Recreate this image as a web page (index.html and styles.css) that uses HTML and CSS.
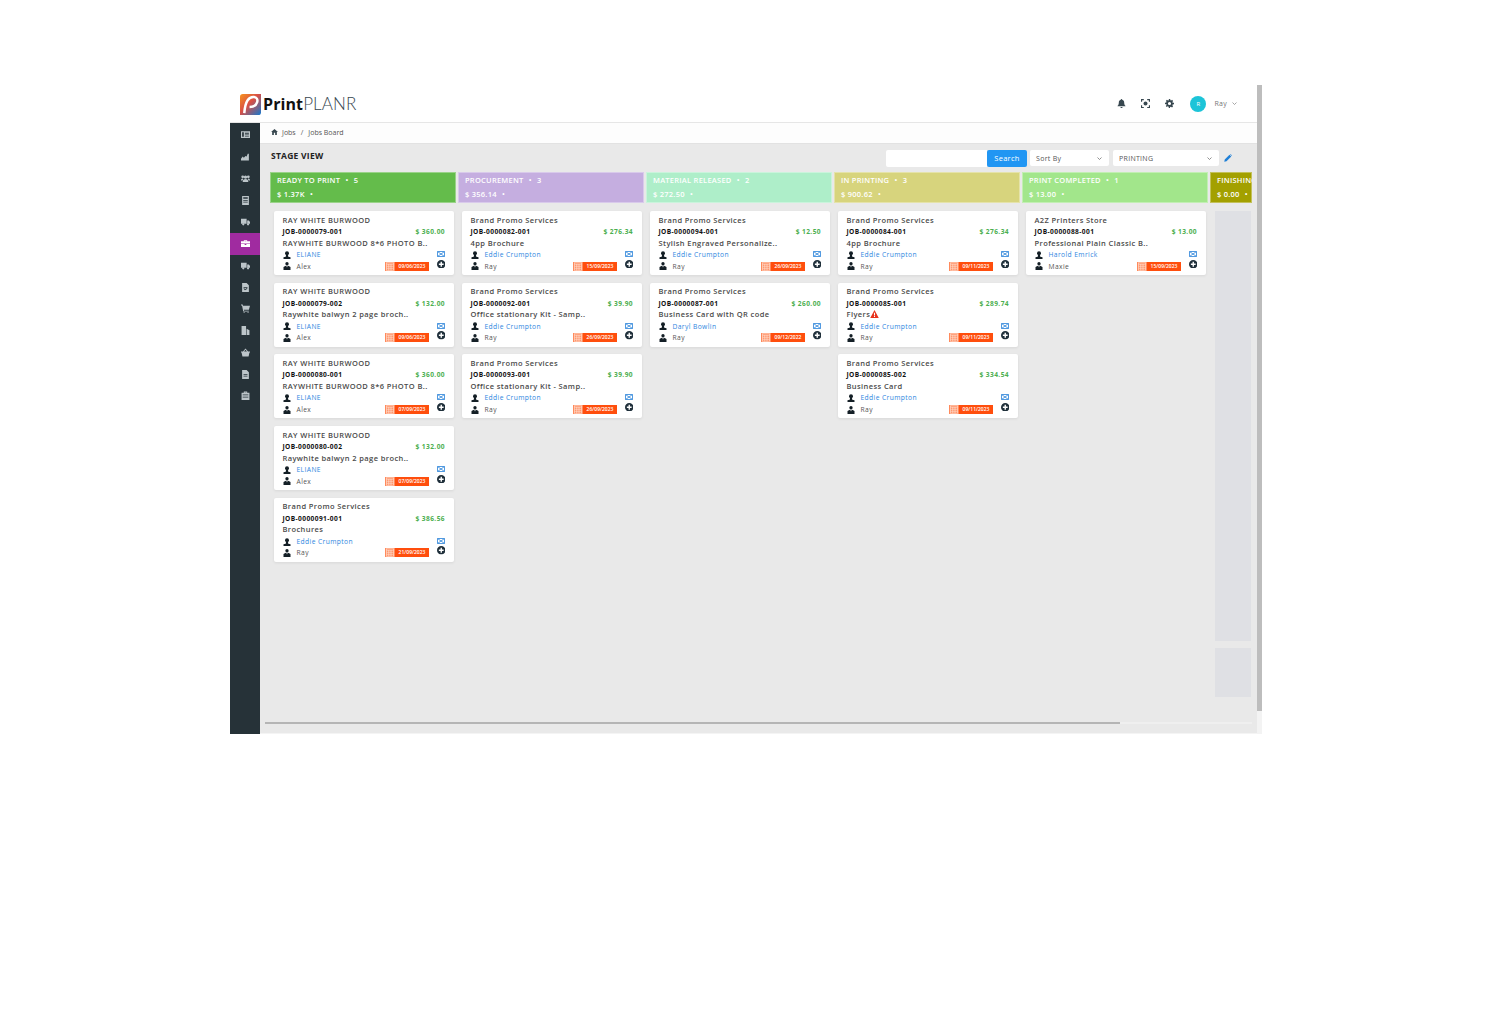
FILE: index.html
```html
<!DOCTYPE html>
<html lang="en">
<head>
    <meta charset="UTF-8">
    <title>Jobs Board</title>
    <link rel="stylesheet" href="styles.css">
</head>
<body>
<svg class="defs" width="0" height="0">
    <symbol id="i-user" viewBox="0 0 16 16"><circle cx="8" cy="4.500" r="4"/><path d="M6 8h4l.5 3.500 4.500 1V16H1v-3.500l4.500-1z"/></symbol>
    <symbol id="i-rep" viewBox="0 0 16 16"><circle cx="8" cy="3.500" r="3.300"/><path d="M1 16v-6l4.500-2.500L7 11V7.500h2V11l1.500-3.500L15 10v6z"/></symbol>
    <symbol id="i-mail" viewBox="0 0 16 12"><path d="M1 1h14v10H1zM1 1l14 10M15 1 1 11" fill="none" stroke="#3f8fdc" stroke-width="1.800"/></symbol>
    <symbol id="i-plus" viewBox="0 0 16 16"><path d="M8 0a8 8 0 1 0 0 16A8 8 0 0 0 8 0zm-1.300 3.500h2.600v3.200h3.200v2.600H9.300v3.200H6.700V9.300H3.500V6.700h3.200z" fill-rule="evenodd"/></symbol>
    <symbol id="i-cal" viewBox="0 0 20 18"><path d="M3 1.500h14M3 4.500h14M3 1v16M7.500 4v13M12 4v13M17 1v16M3 8.500h14M3 12.500h14M3 16.500h14" fill="none" stroke="#ffe3d6" stroke-width="1.300"/></symbol>
    <symbol id="i-warn" viewBox="0 0 16 15"><path d="M8 0 16 15H0zM7 5v5h2V5zm0 6v2h2v-2z" fill-rule="evenodd"/></symbol>
</svg>

<div class="app">
    <div class="frame">
        <header class="topbar">
            <div class="logo">
                <svg class="logo-mark" viewBox="0 0 22 22">
                    <defs>
                        <linearGradient id="lg" x1="0" y1="0" x2="1" y2="1">
                            <stop offset="0" stop-color="#f7931e"/>
                            <stop offset="0.45" stop-color="#d94f45"/>
                            <stop offset="1" stop-color="#1479d0"/>
                        </linearGradient>
                    </defs>
                    <path d="M3 0h19v19a3 3 0 0 1-3 3H0V3a3 3 0 0 1 3-3z" fill="url(#lg)"/>
                    <path d="M4.500 20C5 13 6 9.500 8 6.500 9.800 4 12 3 14.500 3.200c3 .3 4.300 2.500 3.500 5.300-1 3.400-3.800 5-8 5" fill="none" stroke="#fff" stroke-width="2.600"/>
                </svg>
                <span class="logo-text"><b>Print</b>PLANR</span>
            </div>
            <div class="top-tools">
                <svg class="tool" viewBox="0 0 16 16"><path d="M8 0a1.300 1.300 0 0 0-1.300 1.400C4.500 2 3.200 3.900 3.200 6.500c0 3-1 4.500-2.200 5.700V13h14v-.8c-1.200-1.200-2.200-2.700-2.200-5.700 0-2.600-1.300-4.500-3.500-5.100A1.300 1.300 0 0 0 8 0zM6 14a2 2 0 0 0 4 0z"/></svg>
                <svg class="tool" viewBox="0 0 16 16"><path d="M1 5V1h4M11 1h4v4M15 11v4h-4M5 15H1v-4" fill="none" stroke="#37474f" stroke-width="2"/><circle cx="8" cy="8" r="3.500"/></svg>
                <svg class="tool" viewBox="0 0 16 16"><path d="M6.800 0h2.400l.4 2.200 1.500.6L12.500 1.500l1.900 1.900-1.300 1.900.6 1.500L16 6.800v2.400l-2.300.4-.6 1.500 1.300 1.900-1.900 1.900-1.900-1.300-1.500.6L8.800 16H6.800l-.4-2.300-1.500-.6-1.900 1.300-1.500-1.900 1.300-1.900-.6-1.500L0 9.200V6.800l2.200-.4.600-1.500L1.500 3.400l1.900-1.900 1.900 1.300 1.500-.6zM8 5.200a2.800 2.800 0 1 0 0 5.600 2.800 2.800 0 0 0 0-5.600z" fill-rule="evenodd"/></svg>
                <span class="avatar">R</span>
                <span class="user-name">Ray</span>
                <svg class="chev" viewBox="0 0 10 6"><path d="M1 1l4 4 4-4" fill="none" stroke="#777" stroke-width="1.300"/></svg>
            </div>
        </header>

        <div class="shell">
            <nav class="sidebar">
                <div class="nav-item"><svg viewBox="0 0 16 16"><path d="M0 2h16v12H0zM2 4v8h3V4zM7 5v1.500h7V5zM7 8v1.500h7V8zM7 11v1h7v-1z" fill-rule="evenodd"/></svg></div>
                <div class="nav-item"><svg viewBox="0 0 16 16"><path d="M0 15v-3l3-4 2 2 3-3 2 1 2-5h2v12z"/></svg></div>
                <div class="nav-item"><svg viewBox="0 0 16 16"><circle cx="8" cy="5.500" r="3"/><circle cx="3" cy="5" r="2.500"/><circle cx="13" cy="5" r="2.500"/><path d="M3 14c0-3.500 2-5 5-5s5 1.500 5 5zM0 11.500C0 9.500 1 8 3 8l1 1-1.500 2.500zM16 11.500c0-2-1-3.500-3-3.500l-1 1 1.500 2.500z"/></svg></div>
                <div class="nav-item"><svg viewBox="0 0 16 16"><path d="M2 0h12v16H2zM4 2v3h8V2zM4 7v1.500h8V7zM4 10v1.500h8V10z" fill-rule="evenodd"/></svg></div>
                <div class="nav-item"><svg viewBox="0 0 16 16"><path d="M0 3h10v9H0zM11 6h3l2 3v3h-5z"/><circle cx="4" cy="13" r="2"/><circle cx="12.500" cy="13" r="2"/></svg></div>
                <div class="nav-item active"><svg viewBox="0 0 16 16"><path d="M5 4V2h6v2h5v4H0V4zM6.500 4h3V3.500h-3zM0 9h6.500v1.500h3V9H16v5H0z" fill-rule="evenodd"/></svg></div>
                <div class="nav-item"><svg viewBox="0 0 16 16"><path d="M0 3h10v9H0zM11 6h3l2 3v3h-5z"/><circle cx="4" cy="13" r="2"/><circle cx="12.500" cy="13" r="2"/></svg></div>
                <div class="nav-item"><svg viewBox="0 0 16 16"><path d="M2 0h8l4 4v12H2zM4.500 7v1.500h7V7zM4.500 10 7 13l4.500-3-1-1L7 11 5.500 9z" fill-rule="evenodd"/></svg></div>
                <div class="nav-item"><svg viewBox="0 0 16 16"><path d="M0 1h3l.6 2H16l-2 7H5l.5 2H14v1.500H4L1.800 2.500H0z"/><circle cx="5.500" cy="15" r="1"/><circle cx="12.500" cy="15" r="1"/></svg></div>
                <div class="nav-item"><svg viewBox="0 0 16 16"><path d="M1 0h8v16H1zM10 5l5 2.500V16h-5z"/></svg></div>
                <div class="nav-item"><svg viewBox="0 0 16 16"><path d="M8 1 3.500 6H0v2h1l1.500 7h11L15 8h1V6h-3.500zM8 3l2.500 3h-5z" fill-rule="evenodd"/></svg></div>
                <div class="nav-item"><svg viewBox="0 0 16 16"><path d="M2 0h8l4 4v12H2zM4.500 7v1.500h7V7zM4.500 10v1.500h7V10z" fill-rule="evenodd"/></svg></div>
                <div class="nav-item"><svg viewBox="0 0 16 16"><path d="M5 3V1h6v2h4v13H1V3zM6.500 3h3v-.5h-3zM3 6v1.500h10V6zM3 10v1.500h10V10z" fill-rule="evenodd"/></svg></div>
            </nav>

            <main class="main">
                <div class="crumbs">
                    <svg class="home" viewBox="0 0 16 14"><path d="M8 0 0 7h2.500v7h4V9h3v5h4V7H16z"/></svg>
                    <span>Jobs</span><span class="sep">/</span><span>Jobs Board</span>
                </div>

                <div class="toolbar">
                    <h4 class="page-title">STAGE VIEW</h4>
                    <div class="filters">
                        <input class="search-box" type="text">
                        <button class="search-btn">Search</button>
                        <div class="pick pick-sort">Sort By<svg class="chev" viewBox="0 0 10 6"><path d="M1 1l4 4 4-4" fill="none" stroke="#555" stroke-width="1.300"/></svg></div>
                        <div class="pick pick-stage">PRINTING<svg class="chev" viewBox="0 0 10 6"><path d="M1 1l4 4 4-4" fill="none" stroke="#555" stroke-width="1.300"/></svg></div>
                        <svg class="pencil" viewBox="0 0 16 16"><path d="M11 1.500 14.500 5 5 14.500 0.500 15.500 1.500 11zM12 .5l1-.5 3 3-.5 1z"/></svg>
                    </div>
                </div>

                <div class="board">
                    <section class="stage">
                        <div class="stage-head c-green"><div>READY TO PRINT <i>•</i> 5</div><div>$ 1.37K <i>•</i></div></div>
                        <article class="card">
                            <div class="client">RAY WHITE BURWOOD</div>
                            <div class="job"><span>JOB-0000079-001</span><span class="amount">$ 360.00</span></div>
                            <div class="product">RAYWHITE BURWOOD 8*6 PHOTO B..</div>
                            <div class="who"><svg class="ic"><use href="#i-user"/></svg><a>ELIANE</a><svg class="mail"><use href="#i-mail"/></svg></div>
                            <div class="who"><svg class="ic"><use href="#i-rep"/></svg><span>Alex</span><span class="due"><svg><use href="#i-cal"/></svg><b>09/06/2023</b></span><svg class="plus"><use href="#i-plus"/></svg></div>
                        </article>
                        <article class="card">
                            <div class="client">RAY WHITE BURWOOD</div>
                            <div class="job"><span>JOB-0000079-002</span><span class="amount">$ 132.00</span></div>
                            <div class="product">Raywhite balwyn 2 page broch..</div>
                            <div class="who"><svg class="ic"><use href="#i-user"/></svg><a>ELIANE</a><svg class="mail"><use href="#i-mail"/></svg></div>
                            <div class="who"><svg class="ic"><use href="#i-rep"/></svg><span>Alex</span><span class="due"><svg><use href="#i-cal"/></svg><b>09/06/2023</b></span><svg class="plus"><use href="#i-plus"/></svg></div>
                        </article>
                        <article class="card">
                            <div class="client">RAY WHITE BURWOOD</div>
                            <div class="job"><span>JOB-0000080-001</span><span class="amount">$ 360.00</span></div>
                            <div class="product">RAYWHITE BURWOOD 8*6 PHOTO B..</div>
                            <div class="who"><svg class="ic"><use href="#i-user"/></svg><a>ELIANE</a><svg class="mail"><use href="#i-mail"/></svg></div>
                            <div class="who"><svg class="ic"><use href="#i-rep"/></svg><span>Alex</span><span class="due"><svg><use href="#i-cal"/></svg><b>07/09/2023</b></span><svg class="plus"><use href="#i-plus"/></svg></div>
                        </article>
                        <article class="card">
                            <div class="client">RAY WHITE BURWOOD</div>
                            <div class="job"><span>JOB-0000080-002</span><span class="amount">$ 132.00</span></div>
                            <div class="product">Raywhite balwyn 2 page broch..</div>
                            <div class="who"><svg class="ic"><use href="#i-user"/></svg><a>ELIANE</a><svg class="mail"><use href="#i-mail"/></svg></div>
                            <div class="who"><svg class="ic"><use href="#i-rep"/></svg><span>Alex</span><span class="due"><svg><use href="#i-cal"/></svg><b>07/09/2023</b></span><svg class="plus"><use href="#i-plus"/></svg></div>
                        </article>
                        <article class="card">
                            <div class="client">Brand Promo Services</div>
                            <div class="job"><span>JOB-0000091-001</span><span class="amount">$ 386.56</span></div>
                            <div class="product">Brochures</div>
                            <div class="who"><svg class="ic"><use href="#i-user"/></svg><a>Eddie Crumpton</a><svg class="mail"><use href="#i-mail"/></svg></div>
                            <div class="who"><svg class="ic"><use href="#i-rep"/></svg><span>Ray</span><span class="due"><svg><use href="#i-cal"/></svg><b>21/09/2023</b></span><svg class="plus"><use href="#i-plus"/></svg></div>
                        </article>
                    </section>

                    <section class="stage">
                        <div class="stage-head c-purple"><div>PROCUREMENT <i>•</i> 3</div><div>$ 356.14 <i>•</i></div></div>
                        <article class="card">
                            <div class="client">Brand Promo Services</div>
                            <div class="job"><span>JOB-0000082-001</span><span class="amount">$ 276.34</span></div>
                            <div class="product">4pp Brochure</div>
                            <div class="who"><svg class="ic"><use href="#i-user"/></svg><a>Eddie Crumpton</a><svg class="mail"><use href="#i-mail"/></svg></div>
                            <div class="who"><svg class="ic"><use href="#i-rep"/></svg><span>Ray</span><span class="due"><svg><use href="#i-cal"/></svg><b>15/09/2023</b></span><svg class="plus"><use href="#i-plus"/></svg></div>
                        </article>
                        <article class="card">
                            <div class="client">Brand Promo Services</div>
                            <div class="job"><span>JOB-0000092-001</span><span class="amount">$ 39.90</span></div>
                            <div class="product">Office stationary Kit - Samp..</div>
                            <div class="who"><svg class="ic"><use href="#i-user"/></svg><a>Eddie Crumpton</a><svg class="mail"><use href="#i-mail"/></svg></div>
                            <div class="who"><svg class="ic"><use href="#i-rep"/></svg><span>Ray</span><span class="due"><svg><use href="#i-cal"/></svg><b>26/09/2023</b></span><svg class="plus"><use href="#i-plus"/></svg></div>
                        </article>
                        <article class="card">
                            <div class="client">Brand Promo Services</div>
                            <div class="job"><span>JOB-0000093-001</span><span class="amount">$ 39.90</span></div>
                            <div class="product">Office stationary Kit - Samp..</div>
                            <div class="who"><svg class="ic"><use href="#i-user"/></svg><a>Eddie Crumpton</a><svg class="mail"><use href="#i-mail"/></svg></div>
                            <div class="who"><svg class="ic"><use href="#i-rep"/></svg><span>Ray</span><span class="due"><svg><use href="#i-cal"/></svg><b>26/09/2023</b></span><svg class="plus"><use href="#i-plus"/></svg></div>
                        </article>
                    </section>

                    <section class="stage">
                        <div class="stage-head c-mint"><div>MATERIAL RELEASED <i>•</i> 2</div><div>$ 272.50 <i>•</i></div></div>
                        <article class="card">
                            <div class="client">Brand Promo Services</div>
                            <div class="job"><span>JOB-0000094-001</span><span class="amount">$ 12.50</span></div>
                            <div class="product">Stylish Engraved Personalize..</div>
                            <div class="who"><svg class="ic"><use href="#i-user"/></svg><a>Eddie Crumpton</a><svg class="mail"><use href="#i-mail"/></svg></div>
                            <div class="who"><svg class="ic"><use href="#i-rep"/></svg><span>Ray</span><span class="due"><svg><use href="#i-cal"/></svg><b>26/09/2023</b></span><svg class="plus"><use href="#i-plus"/></svg></div>
                        </article>
                        <article class="card">
                            <div class="client">Brand Promo Services</div>
                            <div class="job"><span>JOB-0000087-001</span><span class="amount">$ 260.00</span></div>
                            <div class="product">Business Card with QR code</div>
                            <div class="who"><svg class="ic"><use href="#i-user"/></svg><a>Daryl Bowlin</a><svg class="mail"><use href="#i-mail"/></svg></div>
                            <div class="who"><svg class="ic"><use href="#i-rep"/></svg><span>Ray</span><span class="due"><svg><use href="#i-cal"/></svg><b>09/12/2022</b></span><svg class="plus"><use href="#i-plus"/></svg></div>
                        </article>
                    </section>

                    <section class="stage">
                        <div class="stage-head c-olive"><div>IN PRINTING <i>•</i> 3</div><div>$ 900.62 <i>•</i></div></div>
                        <article class="card">
                            <div class="client">Brand Promo Services</div>
                            <div class="job"><span>JOB-0000084-001</span><span class="amount">$ 276.34</span></div>
                            <div class="product">4pp Brochure</div>
                            <div class="who"><svg class="ic"><use href="#i-user"/></svg><a>Eddie Crumpton</a><svg class="mail"><use href="#i-mail"/></svg></div>
                            <div class="who"><svg class="ic"><use href="#i-rep"/></svg><span>Ray</span><span class="due"><svg><use href="#i-cal"/></svg><b>09/11/2023</b></span><svg class="plus"><use href="#i-plus"/></svg></div>
                        </article>
                        <article class="card">
                            <div class="client">Brand Promo Services</div>
                            <div class="job"><span>JOB-0000085-001</span><span class="amount">$ 289.74</span></div>
                            <div class="product">Flyers<svg class="warn"><use href="#i-warn"/></svg></div>
                            <div class="who"><svg class="ic"><use href="#i-user"/></svg><a>Eddie Crumpton</a><svg class="mail"><use href="#i-mail"/></svg></div>
                            <div class="who"><svg class="ic"><use href="#i-rep"/></svg><span>Ray</span><span class="due"><svg><use href="#i-cal"/></svg><b>09/11/2023</b></span><svg class="plus"><use href="#i-plus"/></svg></div>
                        </article>
                        <article class="card">
                            <div class="client">Brand Promo Services</div>
                            <div class="job"><span>JOB-0000085-002</span><span class="amount">$ 334.54</span></div>
                            <div class="product">Business Card</div>
                            <div class="who"><svg class="ic"><use href="#i-user"/></svg><a>Eddie Crumpton</a><svg class="mail"><use href="#i-mail"/></svg></div>
                            <div class="who"><svg class="ic"><use href="#i-rep"/></svg><span>Ray</span><span class="due"><svg><use href="#i-cal"/></svg><b>09/11/2023</b></span><svg class="plus"><use href="#i-plus"/></svg></div>
                        </article>
                    </section>

                    <section class="stage">
                        <div class="stage-head c-lime"><div>PRINT COMPLETED <i>•</i> 1</div><div>$ 13.00 <i>•</i></div></div>
                        <article class="card">
                            <div class="client">A2Z Printers Store</div>
                            <div class="job"><span>JOB-0000088-001</span><span class="amount">$ 13.00</span></div>
                            <div class="product">Professional Plain Classic B..</div>
                            <div class="who"><svg class="ic"><use href="#i-user"/></svg><a>Harold Emrick</a><svg class="mail"><use href="#i-mail"/></svg></div>
                            <div class="who"><svg class="ic"><use href="#i-rep"/></svg><span>Maxie</span><span class="due"><svg><use href="#i-cal"/></svg><b>15/09/2023</b></span><svg class="plus"><use href="#i-plus"/></svg></div>
                        </article>
                    </section>

                    <section class="stage stage-cut">
                        <div class="stage-head c-moss"><div>FINISHING</div><div>$ 0.00 <i>•</i></div></div>
                        <div class="empty-tall"></div>
                        <div class="empty-short"></div>
                    </section>
                </div>

                <div class="h-scroll"><div class="h-thumb"></div></div>
            </main>
        </div>
    </div>
    <div class="v-scroll"><div class="v-thumb"></div></div>
</div>
</body>
</html>
```

FILE: styles.css
```css
* {
    box-sizing: border-box;
}
body {
    margin: 0;
    background-color: #fff;
    font-family: "Open Sans", sans-serif;
    color: #444;
}
.defs {
    position: absolute;
}
.app {
    display: flex;
    width: 1032px;
    height: 649px;
    margin: 85px 0 0 230px;
}
.frame {
    display: flex;
    flex-direction: column;
    width: 1027px;
}
.v-scroll {
    width: 5px;
    background-color: #f3f3f3;
}
.v-thumb {
    height: 626px;
    background-color: #bdbdbd;
}

/* top bar */
.topbar {
    display: flex;
    align-items: center;
    justify-content: space-between;
    height: 38px;
    padding: 0 20px 0 10px;
    background-color: #fff;
    border-bottom: 1px solid #e6e6e6;
}
.logo {
    display: flex;
    align-items: center;
    gap: 2px;
    padding-top: 1px;
}
.logo-mark {
    width: 21px;
    height: 21px;
}
.logo-text {
    font-family: "Lato", sans-serif;
    font-size: 17px;
    font-weight: 300;
    letter-spacing: .1px;
    color: #37474f;
}
.logo-text b {
    font-family: "Open Sans", sans-serif;
    font-size: 16px;
    font-weight: 700;
    color: #111;
}
.top-tools {
    display: flex;
    align-items: center;
}
.tool {
    width: 9px;
    height: 9px;
    margin-right: 15px;
    fill: #37474f;
}
.avatar {
    display: flex;
    align-items: center;
    justify-content: center;
    width: 16px;
    height: 16px;
    margin-left: 1px;
    border-radius: 50%;
    background-color: #1cc4d8;
    color: #fff;
    font-size: 6px;
}
.user-name {
    margin-left: 8px;
    font-size: 7px;
    letter-spacing: .3px;
    color: #777;
}
.chev {
    width: 5px;
    height: 3px;
}
.top-tools .chev {
    margin-left: 5px;
}

/* sidebar */
.shell {
    display: flex;
    flex: 1;
    min-height: 0;
}
.sidebar {
    flex: none;
    width: 30px;
    padding-top: 1px;
    background-color: #263238;
}
.nav-item {
    display: flex;
    align-items: center;
    justify-content: center;
    height: 21.750px;
}
.nav-item svg {
    width: 9px;
    height: 9px;
    fill: #bcc5c9;
}
.nav-item.active {
    background-color: #a02ba0;
}
.nav-item.active svg {
    fill: #fff;
}

/* main */
.main {
    position: relative;
    flex: 1;
    min-width: 0;
    overflow: hidden;
    background-color: #e9e9e9;
    border-bottom: 1px solid #f4f4f4;
}
.crumbs {
    display: flex;
    align-items: center;
    gap: 4px;
    height: 21px;
    padding: 0 0 2px 11px;
    background-color: #fdfdfd;
    border-bottom: 1px solid #e2e2e2;
    font-size: 7px;
    color: #555;
}
.home {
    width: 7px;
    height: 6px;
    fill: #37474f;
}
.sep {
    margin: 0 1px;
}
.toolbar {
    display: flex;
    align-items: center;
    justify-content: space-between;
    height: 28px;
    padding: 0 25px 0 11px;
}
.page-title {
    margin: 0 0 6px;
    font-size: 8.500px;
    font-weight: 700;
    letter-spacing: .25px;
    color: #222;
}
.filters {
    display: flex;
    align-items: center;
}
.search-box {
    width: 101px;
    height: 17px;
    border: 0;
    border-radius: 2px 0 0 2px;
    background-color: #fff;
}
.search-btn {
    width: 40px;
    height: 17px;
    padding: 0;
    border: 0;
    border-radius: 2px;
    background-color: #2196f3;
    color: #fff;
    font-family: inherit;
    font-size: 7.500px;
    letter-spacing: .3px;
}
.pick {
    display: flex;
    align-items: center;
    justify-content: space-between;
    height: 16px;
    margin-left: 3px;
    padding: 1px 7px 0 6px;
    background-color: #fff;
    border-radius: 2px;
    font-size: 7px;
    letter-spacing: .3px;
    color: #555;
}
.pick-sort {
    width: 79px;
}
.pick-stage {
    width: 106px;
    margin-left: 4px;
}
.pencil {
    width: 8px;
    height: 8px;
    margin-left: 5px;
    fill: #1e7fd6;
}

/* board */
.board {
    display: flex;
    gap: 2px;
    padding-left: 10px;
}
.stage {
    flex: none;
    width: 186px;
    padding: 0 2px 0 4px;
}
.stage-cut {
    width: 42px;
    padding: 0 1px 0 5px;
    overflow: hidden;
    white-space: nowrap;
}
.stage-head {
    height: 31px;
    margin: 0 -2px 8px -4px;
    padding: 0 0 0 6px;
    border: 1px solid rgba(255, 255, 255, .35);
    color: #fff;
    font-size: 7.500px;
    font-weight: 600;
    line-height: 14px;
    letter-spacing: .25px;
}
.stage-cut .stage-head {
    margin: 0 -1px 8px -5px;
}
.stage-head i {
    margin: 0 3px;
    font-style: normal;
}
.c-green { background-color: #64bc4b; }
.c-purple { background-color: #c5aee0; }
.c-mint { background-color: #aeeec9; }
.c-olive { background-color: #d7d47d; }
.c-lime { background-color: #a2e68b; }
.c-moss { background-color: #a3a000; }
.empty-tall,
.empty-short {
    background-color: #dfe0e4;
}
.empty-tall {
    height: 430px;
    margin-bottom: 7px;
}
.empty-short {
    height: 49px;
}

/* job card */
.card {
    height: 64px;
    margin-bottom: 7.700px;
    padding: 3.500px 9px 0 8.500px;
    background-color: #fff;
    border-radius: 2px;
    box-shadow: 0 1px 3px rgba(0, 0, 0, .08);
    font-size: 7.500px;
    line-height: 11.500px;
    letter-spacing: .4px;
    white-space: nowrap;
}
.client,
.product {
    font-weight: 600;
    color: #4a4a4a;
}
.job {
    display: flex;
    justify-content: space-between;
    font-size: 6.600px;
    font-weight: 700;
    color: #111;
}
.amount {
    color: #4caf50;
}
.who {
    position: relative;
    display: flex;
    align-items: center;
    height: 11.500px;
    font-size: 6.700px;
    color: #555;
}
.who a {
    color: #2d86e0;
}
.ic {
    width: 8px;
    height: 8px;
    margin-right: 6px;
    fill: #141f26;
}
.mail {
    position: absolute;
    right: 0;
    top: 2px;
    width: 8px;
    height: 6px;
}
.plus {
    position: absolute;
    right: 0;
    top: -1px;
    width: 8.500px;
    height: 8.500px;
    fill: #1f2f3a;
}
.due {
    position: absolute;
    right: 16px;
    top: 1px;
    display: flex;
    width: 44px;
    height: 9px;
    background-color: #ff4e0d;
}
.due svg {
    width: 10px;
    height: 9px;
    background-color: #ff8a5c;
}
.due b {
    flex: 1;
    font-size: 5px;
    font-weight: 600;
    line-height: 9px;
    letter-spacing: 0;
    text-align: center;
    color: #fff;
}
.warn {
    width: 9px;
    height: 8px;
    fill: #e8321c;
    vertical-align: -1px;
}

/* bottom scroll */
.h-scroll {
    position: absolute;
    left: 5px;
    right: 5px;
    bottom: 9px;
    height: 2px;
    background-color: #efefef;
}
.h-thumb {
    width: 855px;
    height: 2px;
    background-color: #b5b5b5;
}
```
